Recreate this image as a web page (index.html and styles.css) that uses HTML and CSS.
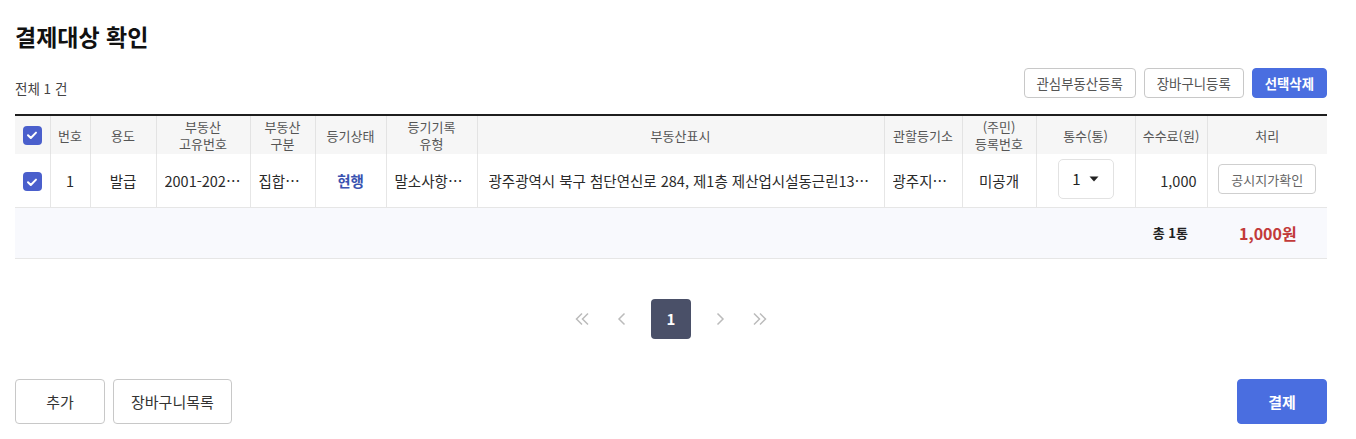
FILE: index.html
```html
<!DOCTYPE html>
<html lang="ko">
<head>
<meta charset="utf-8">
<link rel="stylesheet" href="styles.css">
</head>
<body>
<div class="page">
  <h1 class="title">결제대상 확인</h1>
  <div class="toolbar">
    <div class="count">전체 1 건</div>
    <div class="actions">
      <button class="btn-sm">관심부동산등록</button>
      <button class="btn-sm">장바구니등록</button>
      <button class="btn-sm primary">선택삭제</button>
    </div>
  </div>
  <table class="grid">
    <colgroup>
      <col style="width:35px"><col style="width:40px"><col style="width:66px"><col style="width:94px">
      <col style="width:65px"><col style="width:71px"><col style="width:91px"><col style="width:407px">
      <col style="width:78px"><col style="width:74px"><col style="width:99px"><col style="width:72px">
      <col style="width:120px">
    </colgroup>
    <thead>
      <tr>
        <th class="chk-cell"><span class="chk"><svg viewBox="0 0 18 18" width="18" height="18"><path d="M5 9.2l2.8 2.8L13 6.6" fill="none" stroke="#fff" stroke-width="2" stroke-linecap="round" stroke-linejoin="round"/></svg></span></th>
        <th>번호</th>
        <th>용도</th>
        <th>부동산<br>고유번호</th>
        <th>부동산<br>구분</th>
        <th>등기상태</th>
        <th>등기기록<br>유형</th>
        <th>부동산표시</th>
        <th>관할등기소</th>
        <th>(주민)<br>등록번호</th>
        <th>통수(통)</th>
        <th>수수료(원)</th>
        <th>처리</th>
      </tr>
    </thead>
    <tbody>
      <tr class="data">
        <td class="chk-cell"><span class="chk"><svg viewBox="0 0 18 18" width="18" height="18"><path d="M5 9.2l2.8 2.8L13 6.6" fill="none" stroke="#fff" stroke-width="2" stroke-linecap="round" stroke-linejoin="round"/></svg></span></td>
        <td>1</td>
        <td>발급</td>
        <td><div class="ell">2001-2023-012345</div></td>
        <td><div class="ell">집합건물</div></td>
        <td class="status">현행</td>
        <td><div class="ell">말소사항포함</div></td>
        <td class="left"><div class="ell">광주광역시 북구 첨단연신로 284, 제1층 제산업시설동근린133호 (광주광역시)</div></td>
        <td><div class="ell">광주지방법원</div></td>
        <td>미공개</td>
        <td><span class="select">1 <svg width="10" height="6" viewBox="0 0 10 6"><path d="M0.5 0.5h9L5 5.5z" fill="#222"/></svg></span></td>
        <td class="right">1,000</td>
        <td><button class="btn-cell">공시지가확인</button></td>
      </tr>
      <tr class="sum">
        <td colspan="12" class="sum-label">총 1통</td>
        <td class="sum-price">1,000원</td>
      </tr>
    </tbody>
  </table>
  <nav class="pager">
    <span class="pg"><svg width="16" height="14" viewBox="0 0 16 14"><path d="M8 1.5L2.5 7 8 12.5M14 1.5L8.5 7 14 12.5" fill="none" stroke="#bbb" stroke-width="1.5"/></svg></span>
    <span class="pg"><svg width="10" height="14" viewBox="0 0 10 14"><path d="M7.5 1.5L2 7l5.5 5.5" fill="none" stroke="#bbb" stroke-width="1.5"/></svg></span>
    <span class="pg current">1</span>
    <span class="pg"><svg width="10" height="14" viewBox="0 0 10 14"><path d="M2.5 1.5L8 7l-5.5 5.5" fill="none" stroke="#bbb" stroke-width="1.5"/></svg></span>
    <span class="pg"><svg width="16" height="14" viewBox="0 0 16 14"><path d="M2 1.5L7.5 7 2 12.5M8 1.5L13.5 7 8 12.5" fill="none" stroke="#bbb" stroke-width="1.5"/></svg></span>
  </nav>
  <div class="footer">
    <div class="left-btns">
      <button class="btn-lg">추가</button>
      <button class="btn-lg">장바구니목록</button>
    </div>
    <button class="btn-lg primary">결제</button>
  </div>
</div>
</body>
</html>
```
FILE: styles.css
```css
* { box-sizing: border-box; }
html, body { margin: 0; padding: 0; background: #fff; }
body {
  font-family: "Noto Sans CJK KR", "Noto Sans", sans-serif;
  color: #333;
}
.page {
  width: 1312px;
  margin-left: 15px;
  padding-top: 19px;
}
.title {
  margin: 0;
  font-size: 23px;
  line-height: 34px;
  font-weight: 700;
  color: #111;
}
.toolbar {
  display: flex;
  justify-content: space-between;
  align-items: flex-end;
  margin-top: 15px;
}
.count {
  font-size: 13.5px;
  color: #444;
  line-height: 18px;
  padding-bottom: 1px;
}
.actions { display: flex; gap: 8px; }
.btn-sm {
  font-family: inherit;
  height: 30px;
  padding: 0 12px;
  font-size: 13.4px;
  color: #555;
  background: #fff;
  border: 1px solid #c8c8c8;
  border-radius: 4px;
}
.btn-sm.primary {
  background: #4a6ee0;
  border-color: #4a6ee0;
  color: #fff;
  font-weight: 700;
}
.grid {
  margin-top: 16px;
  width: 1312px;
  border-collapse: collapse;
  table-layout: fixed;
  border-top: 2px solid #1e1e1e;
}
.grid th {
  background: #f6f6f6;
  font-weight: 400;
  font-size: 13px;
  line-height: 17px;
  color: #555;
  height: 39px;
  padding: 0 4px;
  border-left: 1px solid #e3e3e3;
  text-align: center;
}
.grid th:first-child, .grid td:first-child { border-left: none; }
.grid td {
  font-size: 14.5px;
  color: #2a2a2a;
  text-align: center;
  padding: 0 8px;
  border-left: 1px solid #e6e6e6;
}
.grid tr.data td {
  height: 53px;
  border-bottom: 1px solid #e6e6e6;
}
.grid td.chk-cell, .grid th.chk-cell { padding: 0; }
.chk {
  display: inline-flex;
  width: 19px;
  height: 19px;
  border-radius: 4px;
  background: #4a5fcc;
  align-items: center;
  justify-content: center;
  vertical-align: middle;
}
.grid td.chk-cell .chk { margin-top: -2px; }
.ell {
  white-space: nowrap;
  overflow: hidden;
  text-overflow: ellipsis;
}
.grid td.left { text-align: left; padding-left: 11px; padding-right: 12px; }
.grid td.right { text-align: right; padding-right: 10px; }
.grid td.status { color: #3a52b0; font-weight: 700; }
.select {
  display: inline-flex;
  align-items: center;
  justify-content: center;
  gap: 8px;
  width: 56px;
  height: 40px;
  border: 1px solid #e2e2e2;
  border-radius: 5px;
  font-size: 15px;
  color: #222;
  margin-top: -3px;
}
.btn-cell {
  font-family: inherit;
  height: 30px;
  padding: 0 12px;
  font-size: 13px;
  color: #666;
  background: #fff;
  border: 1px solid #cfcfcf;
  border-radius: 4px;
  margin-top: -2px;
}
.grid tr.sum td {
  background: #f8f9fd;
  height: 51px;
  border-left: none;
  border-bottom: 1px solid #e6e6e6;
  font-weight: 700;
}
.grid td.sum-label {
  text-align: right;
  font-size: 13px;
  color: #222;
  padding-right: 19px;
}
.grid td.sum-price {
  text-align: left;
  font-size: 16px;
  color: #c23a3a;
  padding-left: 32px;
}
.pager {
  display: flex;
  justify-content: center;
  align-items: center;
  margin-top: 40px;
}
.pg {
  display: inline-flex;
  width: 40px;
  height: 40px;
  align-items: center;
  justify-content: center;
}
.pager .pg:nth-child(2) { margin-right: 9px; }
.pager .pg:nth-child(4) { margin-left: 9px; }
.pg.current {
  background: #4a5068;
  color: #fff;
  font-weight: 700;
  font-size: 15px;
  border-radius: 4px;
}
.footer {
  display: flex;
  justify-content: space-between;
  margin-top: 40px;
}
.left-btns { display: flex; gap: 8px; }
.btn-lg {
  font-family: inherit;
  height: 45px;
  padding: 0 17px;
  min-width: 90px;
  font-size: 15px;
  color: #333;
  background: #fff;
  border: 1px solid #c8c8c8;
  border-radius: 4px;
}
.btn-lg.primary {
  background: #4a6ee0;
  border-color: #4a6ee0;
  color: #fff;
  font-weight: 700;
}
```
